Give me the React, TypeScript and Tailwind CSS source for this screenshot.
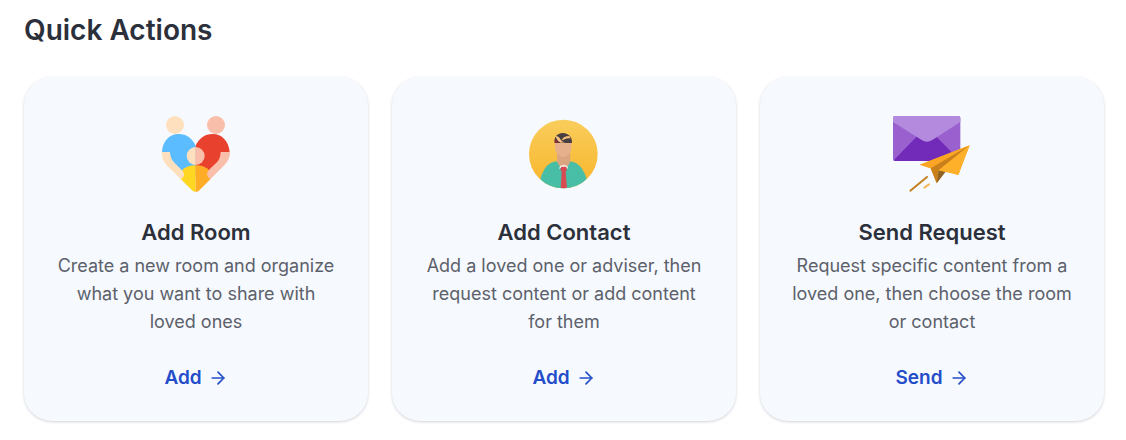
import React from "react";
import { ArrowRight } from "lucide-react";

function RoomIcon() {
  return (
    <svg viewBox="18 27 240 240" className="w-20 h-20" aria-hidden="true">
      <circle cx="75" cy="60" r="27" fill="#fee0be" />
      <circle cx="198" cy="60" r="27" fill="#fabfaa" />
      <path d="M36 141C38 108 58 87 86 87C110 87 128 101 137 122V215H100L60 160Z" fill="#5bbcff" />
      <path d="M239 141C236 108 216 87 188 87C164 87 146 101 137 122V215H175L214 160Z" fill="#e8412d" />
      <path d="M137 181C119 181 105 186 95 197L92 222L126 256Q131 261 137 261Z" fill="#ffd722" />
      <path d="M137 181C155 181 169 186 179 197L182 222L148 256Q143 261 137 261Z" fill="#ffac27" />
      <path d="M35 141H60Q61 160 72 172L98 198Q106 208 99 217Q95 223 91 221L51 182Q35 165 35 141Z" fill="#fee0be" />
      <path d="M240 141H212Q211 160 202 170L176 196Q168 206 174 216Q179 223 184 220L223 181Q240 164 240 141Z" fill="#fabfaa" />
      <path d="M137 126A27 27 0 0 0 137 180Z" fill="#fee0be" />
      <path d="M137 126A27 27 0 0 1 137 180Z" fill="#fabfaa" />
    </svg>
  );
}

function ContactIcon() {
  return (
    <svg viewBox="18 18 240 240" className="w-20 h-20" aria-hidden="true">
      <defs>
        <linearGradient id="contact-bg" x1="0" y1="0" x2="0" y2="1">
          <stop offset="0" stopColor="#f9cd5b" />
          <stop offset="1" stopColor="#f8b52b" />
        </linearGradient>
        <clipPath id="contact-clip">
          <circle cx="136" cy="138" r="103" />
        </clipPath>
      </defs>
      <circle cx="136" cy="138" r="103" fill="url(#contact-bg)" />
      <g clipPath="url(#contact-clip)">
        <path d="M66 218Q75 177 99 164Q112 160 119 160H154Q163 160 174 165Q195 177 206 213V245H66Z" fill="#48bea6" />
        <path d="M117 135H157V162L147 178H127L117 162Z" fill="#d9a680" />
        <path d="M111 102H160V118C160 135 149 147 136 147C123 147 111 135 111 118Z" fill="#e5b08b" />
        <path d="M126 174L137 170L148 174L151 184L144 178H130L123 184Z" fill="#f8f1ec" />
        <path d="M131 176H144L147 184L143 192L147 242H128L131 192L127 184Z" fill="#d94b52" />
        <path d="M110 105Q108 84 122 78Q134 72 147 78Q163 85 162 105Z" fill="#493f43" />
        <path d="M112 84Q122 83 128 95Q132 101 141 103L128 104Q119 101 116 92Z" fill="#f6c27c" />
        <path d="M133 93Q138 84 154 84L158 91Q147 89 140 94Q135 97 131 96Z" fill="#f6c27c" />
        <path d="M110 92L125 104L110 105Z" fill="#872f36" />
      </g>
    </svg>
  );
}

function RequestIcon() {
  return (
    <svg viewBox="30 27 240 240" className="w-20 h-20" aria-hidden="true">
      <rect x="33" y="33" width="202" height="135" rx="6" fill="#9960ce" />
      <path d="M35 166L103 96H164L233 166L229 168H39Z" fill="#722ab9" />
      <path d="M33 51V39Q33 33 39 33H229Q235 33 235 39V51L151 105Q134 116 119 105Z" fill="#b38add" />
      <path d="M113 179L263 121L229 210L191 198L164 235L146 190Z" fill="#fcad2a" />
      <path d="M113 179L263 121L146 190Z" fill="#faa624" />
      <path d="M146 190L263 121L170 196L164 235Z" fill="#c9801a" />
      <path d="M170 196L191 200L164 235Z" fill="#8f6325" />
      <path d="M170 196L263 121L229 210Z" fill="#ffb02b" />
      <path d="M85 257L135 216" stroke="#c38121" strokeWidth="6" strokeLinecap="round" />
      <path d="M127 248L141 238" stroke="#f6b95b" strokeWidth="6" strokeLinecap="round" />
    </svg>
  );
}

function App() {
  const actions = [
    {
      href: "#add-room",
      title: "Add Room",
      text: "Create a new room and organize what you want to share with loved ones",
      label: "Add",
      icon: RoomIcon,
    },
    {
      href: "#add-contact",
      title: "Add Contact",
      text: "Add a loved one or adviser, then request content or add content for them",
      label: "Add",
      icon: ContactIcon,
    },
    {
      href: "#send-request",
      title: "Send Request",
      text: "Request specific content from a loved one, then choose the room or contact",
      label: "Send",
      icon: RequestIcon,
    },
  ];

  return (
    <main className="bg-white font-['Inter',sans-serif] pl-6 pr-[22px] pt-3 pb-5">
      <h1 className="text-[28px] leading-9 font-semibold text-[#2b303b]">Quick Actions</h1>
      <div className="mt-[29px] grid grid-cols-3 gap-6">
        {actions.map((ele) => (
          <section
            key={ele.href}
            className="flex flex-col items-center rounded-[28px] bg-[#f6f9fe] px-8 pt-[37px] pb-7 text-center shadow-[0_1px_3px_rgba(30,41,59,0.2)]"
          >
            <ele.icon />
            <h2 className="mt-6 text-[22px] leading-7 font-semibold text-[#2b303b]">{ele.title}</h2>
            <p className="mt-1.5 text-[18px] leading-7 text-[#5c616b]">{ele.text}</p>
            <a
              href={ele.href}
              className="mt-[26px] flex items-center gap-1.5 text-[19px] leading-[31px] font-semibold text-[#244dc9]"
            >
              {ele.label}
              <ArrowRight className="w-5 h-5" strokeWidth={2} />
            </a>
          </section>
        ))}
      </div>
    </main>
  );
}

export default App;
